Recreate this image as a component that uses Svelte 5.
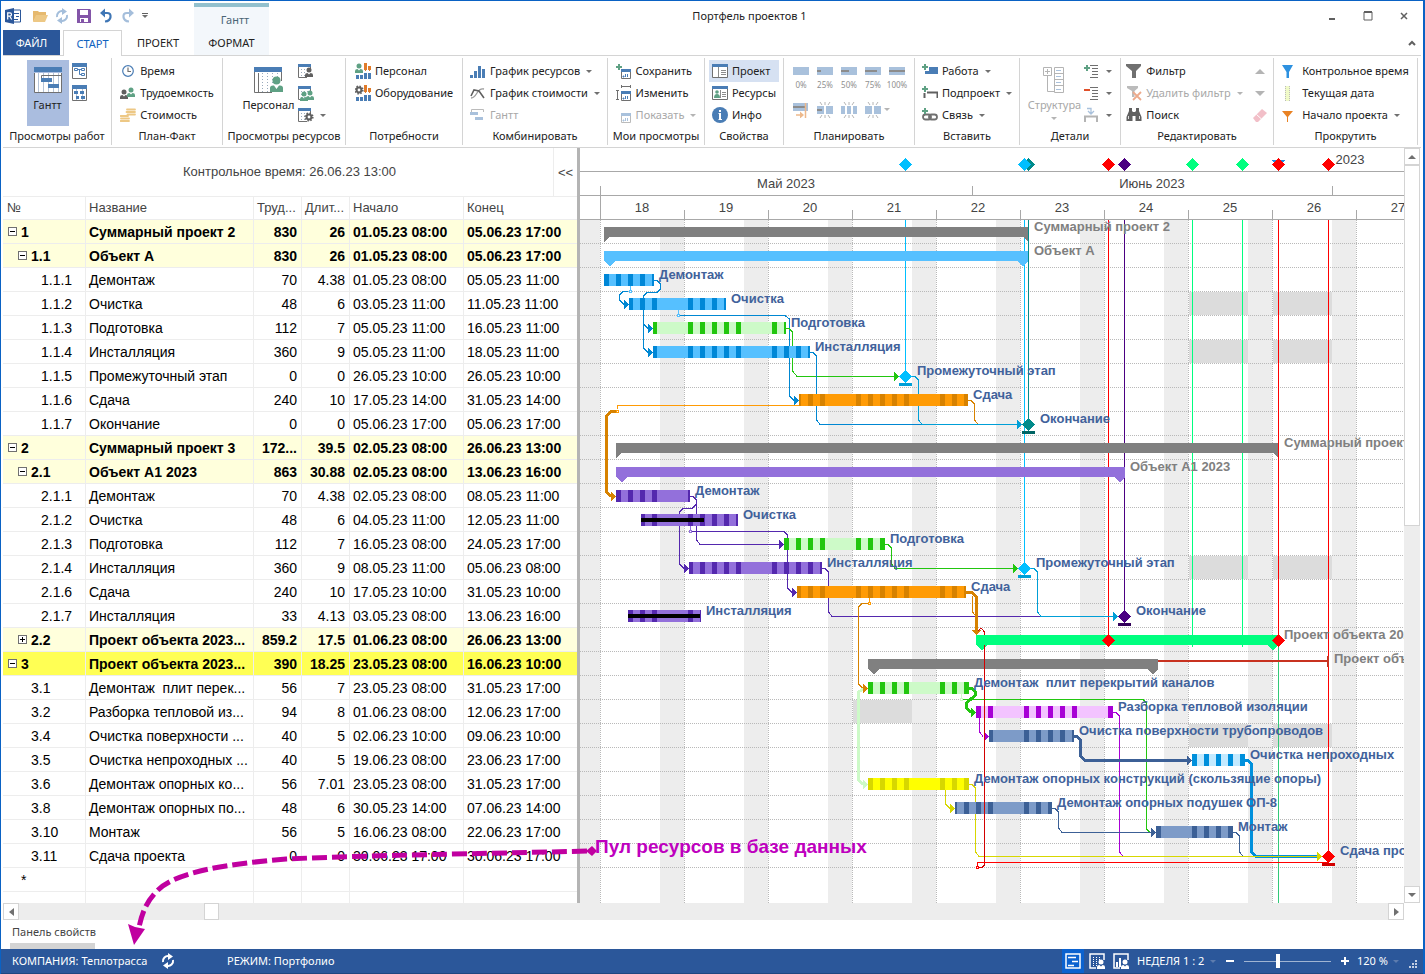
<script lang="ts">
  type Row = {
    id: string;
    name: string;
    work: string;
    days: string;
    start: string;
    end: string;
    level: number;
    toggle?: string;
    kind?: string;
  };

  const rows: Row[] = [
    { id: "1", name: "Суммарный проект 2", work: "830", days: "26", start: "01.05.23 08:00", end: "05.06.23 17:00", level: 0, toggle: "-", kind: "summary" },
    { id: "1.1", name: "Объект А", work: "830", days: "26", start: "01.05.23 08:00", end: "05.06.23 17:00", level: 1, toggle: "-", kind: "summary" },
    { id: "1.1.1", name: "Демонтаж", work: "70", days: "4.38", start: "01.05.23 08:00", end: "05.05.23 11:00", level: 2 },
    { id: "1.1.2", name: "Очистка", work: "48", days: "6", start: "03.05.23 11:00", end: "11.05.23 11:00", level: 2 },
    { id: "1.1.3", name: "Подготовка", work: "112", days: "7", start: "05.05.23 11:00", end: "16.05.23 11:00", level: 2 },
    { id: "1.1.4", name: "Инсталляция", work: "360", days: "9", start: "05.05.23 11:00", end: "18.05.23 11:00", level: 2 },
    { id: "1.1.5", name: "Промежуточный этап", work: "0", days: "0", start: "26.05.23 10:00", end: "26.05.23 10:00", level: 2 },
    { id: "1.1.6", name: "Сдача", work: "240", days: "10", start: "17.05.23 14:00", end: "31.05.23 14:00", level: 2 },
    { id: "1.1.7", name: "Окончание", work: "0", days: "0", start: "05.06.23 17:00", end: "05.06.23 17:00", level: 2 },
    { id: "2", name: "Суммарный проект 3", work: "172...", days: "39.5", start: "02.05.23 08:00", end: "26.06.23 13:00", level: 0, toggle: "-", kind: "summary" },
    { id: "2.1", name: "Объект А1 2023", work: "863", days: "30.88", start: "02.05.23 08:00", end: "13.06.23 16:00", level: 1, toggle: "-", kind: "summary" },
    { id: "2.1.1", name: "Демонтаж", work: "70", days: "4.38", start: "02.05.23 08:00", end: "08.05.23 11:00", level: 2 },
    { id: "2.1.2", name: "Очистка", work: "48", days: "6", start: "04.05.23 11:00", end: "12.05.23 11:00", level: 2 },
    { id: "2.1.3", name: "Подготовка", work: "112", days: "7", start: "16.05.23 08:00", end: "24.05.23 17:00", level: 2 },
    { id: "2.1.4", name: "Инсталляция", work: "360", days: "9", start: "08.05.23 11:00", end: "05.06.23 08:00", level: 2 },
    { id: "2.1.6", name: "Сдача", work: "240", days: "10", start: "17.05.23 10:00", end: "31.05.23 10:00", level: 2 },
    { id: "2.1.7", name: "Инсталляция", work: "33", days: "4.13", start: "03.05.23 08:00", end: "13.06.23 16:00", level: 2 },
    { id: "2.2", name: "Проект объекта 2023...", work: "859.2", days: "17.5", start: "01.06.23 08:00", end: "26.06.23 13:00", level: 1, toggle: "+", kind: "summary" },
    { id: "3", name: "Проект объекта 2023...", work: "390", days: "18.25", start: "23.05.23 08:00", end: "16.06.23 10:00", level: 0, toggle: "-", kind: "summary selected" },
    { id: "3.1", name: "Демонтаж  плит перек...", work: "56", days: "7", start: "23.05.23 08:00", end: "31.05.23 17:00", level: 1 },
    { id: "3.2", name: "Разборка тепловой из...", work: "94", days: "8", start: "01.06.23 08:00", end: "12.06.23 17:00", level: 1 },
    { id: "3.4", name: "Очистка поверхности ...", work: "40", days: "5", start: "02.06.23 10:00", end: "09.06.23 10:00", level: 1 },
    { id: "3.5", name: "Очистка непроходных ...", work: "40", days: "5", start: "19.06.23 08:00", end: "23.06.23 17:00", level: 1 },
    { id: "3.6", name: "Демонтаж опорных ко...", work: "56", days: "7.01", start: "23.05.23 08:00", end: "31.05.23 17:00", level: 1 },
    { id: "3.8", name: "Демонтаж опорных по...", work: "48", days: "6", start: "30.05.23 14:00", end: "07.06.23 14:00", level: 1 },
    { id: "3.10", name: "Монтаж", work: "56", days: "5", start: "16.06.23 08:00", end: "22.06.23 17:00", level: 1 },
    { id: "3.11", name: "Сдача проекта", work: "0", days: "0", start: "30.06.23 17:00", end: "30.06.23 17:00", level: 1 },
  ];

  // chart geometry: origin of the chart pane, first monday, px per week and day
  const OX = 580;
  const OY = 148;
  const MONDAY = 600;
  const WEEK = 84;
  const DAY = 12;
  const ROW = 24;
  const BODY = 220;
  const BOTTOM = 903;
  const RIGHT = 3000;

  const weeks = Array.from({ length: 10 }, (_, i) => ({ x: MONDAY + i * WEEK, no: 18 + i }));
  const lineRows = Array.from({ length: 27 }, (_, i) => BODY + 23.5 + i * ROW);
  const cy = (r: number) => BODY + 12 + r * ROW;

  const blue = ["#56c0ff", "#0087d7"];
  const green = ["#cdfac8", "#22c60f"];
  const orange = ["#ff9b05", "#d78200"];
  const purple = ["#9370db", "#5428ae"];
  const steel = ["#7d9bc8", "#3c6096"];

  const bars = [
    { r: 2, a: 604, b: 654, c: blue, t: "Демонтаж" },
    { r: 3, a: 629, b: 726, c: blue, t: "Очистка" },
    { r: 4, a: 653, b: 786, c: green, t: "Подготовка" },
    { r: 5, a: 653, b: 810, c: blue, t: "Инсталляция" },
    { r: 7, a: 799, b: 968, c: orange, t: "Сдача" },
    { r: 11, a: 616, b: 690, c: purple, t: "Демонтаж" },
    { r: 12, a: 641, b: 738, c: purple, t: "Очистка", done: 704 },
    { r: 13, a: 784, b: 885, c: green, t: "Подготовка" },
    { r: 14, a: 689, b: 822, c: purple, t: "Инсталляция" },
    { r: 15, a: 797, b: 966, c: orange, t: "Сдача" },
    { r: 16, a: 628, b: 701, c: purple, t: "Инсталляция", done: 700 },
    { r: 19, a: 868, b: 969, c: green, t: "Демонтаж  плит перекрытий каналов" },
    { r: 20, a: 976, b: 1113, c: ["#f3c3ff", "#a800d6"], t: "Разборка тепловой изоляции" },
    { r: 21, a: 989, b: 1074, c: steel, t: "Очистка поверхности трубопроводов" },
    { r: 22, a: 1192, b: 1245, c: ["#c3eaff", "#0090dc"], t: "Очистка непроходных" },
    { r: 23, a: 868, b: 969, c: ["#ffff00", "#d7d700"], t: "Демонтаж опорных конструкций (скользящие опоры)" },
    { r: 24, a: 955, b: 1052, c: steel, t: "Демонтаж опорных подушек ОП-8" },
    { r: 25, a: 1156, b: 1233, c: steel, t: "Монтаж" },
  ];

  const summaries = [
    { r: 0, a: 604, b: 1028, c: "#808080", tip: "hook", t: "Суммарный проект 2", lx: 1034 },
    { r: 1, a: 604, b: 1028, c: "#56c0ff", tip: "point", t: "Объект А", lx: 1034 },
    { r: 9, a: 616, b: 1278, c: "#808080", tip: "hook", t: "Суммарный проект 3", lx: 1284 },
    { r: 10, a: 616, b: 1125, c: "#9370db", tip: "point", t: "Объект А1 2023", lx: 1130 },
    { r: 17, a: 976, b: 1278, c: "#00ff7f", tip: "point", t: "Проект объекта 2023", lx: 1284 },
    { r: 18, a: 868, b: 1158, c: "#808080", tip: "point", t: "Проект объекта 2023", lx: 1334 },
  ];

  const milestones = [
    { r: 6, x: 905, c: "#00bfff", base: "#009fd7", t: "Промежуточный этап" },
    { r: 8, x: 1028, c: "#008b8b", base: "#006464", t: "Окончание" },
    { r: 14, x: 1024, c: "#00bfff", base: "#009fd7", t: "Промежуточный этап" },
    { r: 16, x: 1124, c: "#4b0082", base: "#32005a", t: "Окончание" },
    { r: 17, x: 1108, c: "#ff0000" },
    { r: 17, x: 1278, c: "#ff0000" },
    { r: 26, x: 1328, c: "#ff0000", base: "#d20000", t: "Сдача проекта" },
  ];

  const markers = [
    { x: 905, c: "#00bfff", y: 371 },
    { x: 1028, c: "#008b8b", y: 418 },
    { x: 1024, c: "#00bfff", y: 562 },
    { x: 1108, c: "#ff0000", y: 634 },
    { x: 1124, c: "#4b0082", y: 610 },
    { x: 1192, c: "#00ff7f", y: 647 },
    { x: 1242, c: "#00ff7f", y: 647 },
    { x: 1278, c: "#ff0000", y: 634 },
    { x: 1328, c: "#ff0000", y: 850 },
  ];

  const dayOff = [
    { r: 3, x: 1189 }, { r: 3, x: 1273 },
    { r: 5, x: 1189 }, { r: 5, x: 1273 },
    { r: 14, x: 1189 }, { r: 14, x: 1273 },
    { r: 20, x: 853 },
    { r: 21, x: 1189 }, { r: 21, x: 1273 },
  ];

  const B = "#0087d2";
  const C = "#009fd7";
  const G = "#22c60f";
  const O = "#d78200";
  const P = "#5428ae";
  const S = "#3c6096";
  const Y = "#d7d700";
  const V = "#a800d6";
  const PG = "#cdfac8";

  const links = [
    { c: "#56c0ff", d: "M630.5 286V290" },
    { c: B, d: "M628 291.5H623L619.5 295V300L624 304.5" },
    { c: B, d: "M654 280.5H657L660.5 284V289L657 292.5H647L643.5 296V348L648 352.5" },
    { c: B, d: "M643.5 324L648 328.5" },
    { c: "#56c0ff", d: "M678.5 310V314" },
    { c: B, d: "M680 315.5H785L789.5 319V396L794 400.5" },
    { c: G, d: "M786 328.5H789L792.5 332V371L797 376.5H894" },
    { c: B, d: "M810 352.5H813L816.5 356V420L820 424.5H922" },
    { c: C, d: "M912 376.5H915L918.5 380V420L922 424.5H1017" },
    { c: O, d: "M968 400.5H971L974.5 404V420L978 424" },
    { c: "#ff9b05", d: "M799 405.5H617.5V409" },
    { c: O, w: 3, d: "M616 411.5H611L606.5 416V492L611 496.5" },
    { c: P, d: "M690 496.5H693L696.5 500V540L700 544.5H779" },
    { c: P, d: "M696.5 504L692 508.5H683L679.5 512V564L684 568.5" },
    { c: "#9370db", d: "M690.5 526V530" },
    { c: P, d: "M692 531.5H784L787.5 535V588L792 592.5" },
    { c: G, d: "M885 544.5H888L891.5 548V564L895 568.5H1013" },
    { c: P, d: "M822 568.5H825L828.5 572V612L832 616.5H1041" },
    { c: C, d: "M1031 568.5H1034L1037.5 572V612L1041 616.5H1113" },
    { c: "#ff9b05", d: "M869.5 598V602" },
    { c: O, d: "M868 603.5H862L858.5 607V684L863 688.5" },
    { c: O, d: "M972.5 596V612L976 616" },
    { c: O, w: 3, d: "M966 592.5H972L976.5 597V631" },
    { c: PG, w: 3, d: "M863 689L858.5 692V780L863 784.5" },
    { c: PG, d: "M961.5 694V698" },
    { c: G, d: "M963 699.5H1143L1146.5 703V829L1150 832.5" },
    { c: G, w: 3, d: "M969 688.5H972L975.5 692V695L966.5 703V708L971 712.5" },
    { c: V, d: "M979.5 718V732L983 736.5" },
    { c: V, d: "M1113 712.5H1116L1119.5 716V852L1123 856" },
    { c: S, w: 3, d: "M1074 736.5H1077L1080.5 740V756L1085 760.5H1187" },
    { c: "#0090dc", w: 3, d: "M1245 760.5H1248L1251.5 764V852L1256 856.5H1317" },
    { c: S, d: "M1052 808.5H1055L1058.5 812V828L1062 832.5H1151" },
    { c: S, d: "M1233 832.5H1236L1239.5 836V852L1243 856" },
    { c: Y, d: "M945.5 790V804L950 808.5" },
    { c: Y, d: "M969 784.5H972L975.5 788V852L979 856.5H1317" },
  ];

  const arrows = [
    { x: 629, r: 3, c: B }, { x: 653, r: 4, c: B }, { x: 653, r: 5, c: B },
    { x: 799, r: 7, c: B }, { x: 899, r: 6, c: G }, { x: 1022, r: 8, c: C },
    { x: 616, r: 11, c: O }, { x: 784, r: 13, c: P }, { x: 689, r: 14, c: P },
    { x: 797, r: 15, c: P }, { x: 1018, r: 14, c: G }, { x: 1118, r: 16, c: C },
    { x: 868, r: 19, c: O }, { x: 976, r: 20, c: G }, { x: 989, r: 21, c: V },
    { x: 1192, r: 22, c: S }, { x: 868, r: 23, c: PG }, { x: 955, r: 24, c: Y },
    { x: 1156, r: 25, c: S }, { x: 1322, r: 26, c: Y },
  ];

  const knots = [
    { x: 630, y: 291, c: "#56c0ff" },
    { x: 678, y: 315, c: "#56c0ff" },
    { x: 617, y: 411, c: "#ff9b05" },
    { x: 690, y: 531, c: "#9370db" },
    { x: 869, y: 603, c: "#ff9b05" },
    { x: 961, y: 699, c: PG },
  ];

  // working hours inside a bar are drawn dark, one piece per weekday
  function workPieces(a: number, b: number) {
    const out: { x: number; w: number }[] = [];
    for (let d = Math.floor((a - MONDAY) / DAY); MONDAY + d * DAY < b; d++) {
      if (d % 7 > 4) continue;
      const x0 = Math.max(a, MONDAY + d * DAY + 4);
      const x1 = Math.min(b, MONDAY + d * DAY + 9);
      if (x1 > x0) out.push({ x: x0, w: x1 - x0 });
    }
    return out;
  }

  function diamond(x: number, y: number, r = 6) {
    return `M${x + 0.5} ${y - r}L${x + 1 + r} ${y + 0.5}L${x + 0.5} ${y + r + 1}L${x - r} ${y + 0.5}Z`;
  }

  const person = (x: number, y: number, c: string) =>
    `<circle cx="${x}" cy="${y}" r="2.5" fill="${c}"/><path d="M${x - 4} ${y + 7}V${y + 5}Q${x - 4} ${y + 3} ${x - 1.5} ${y + 3}L${x} ${y + 4.5}L${x + 1.5} ${y + 3}Q${x + 4} ${y + 3} ${x + 4} ${y + 5}V${y + 7}Z" fill="${c}"/>`;
  const gear = (x: number, y: number, c: string) =>
    `<circle cx="${x}" cy="${y}" r="2.4" fill="none" stroke="${c}" stroke-width="2"/><circle cx="${x}" cy="${y}" r="3.8" fill="none" stroke="${c}" stroke-width="1.6" stroke-dasharray="1.5 1.48"/>`;
  const dotSheet = `<path d="M0.500 4V14.500H9" fill="none" stroke="#707070"/><path d="M12.500 4V7" stroke="#707070"/><path d="M3.500 6V14M6.500 6V14M9.500 6V9" stroke="#9ab" stroke-dasharray="1 2"/><path d="M0 1H13V4H0Z" fill="#4a7db5"/>`;
  const demand = `<path d="M9 0H12V8H9ZM13 3H16V8H13Z" fill="#e07b2a"/><path d="M9 7.500H16" stroke="#fff" stroke-dasharray="1 1"/><path d="M1 12H4V16H1ZM5 12H8V16H5ZM9 10H12V16H9ZM13 10H16V16H13Z" fill="#4a7db5"/>`;
  const plus = `<path d="M0 3H2V1H4V3H6V5H4V7H2V5H0Z" fill="#5fa184"/>`;
  const smallCal = (g: string, b: string) =>
    `<path d="M5.500 8V15.500H14.500V8" fill="none" stroke="${g}"/><path d="M5 6H15V9H5Z" fill="${b}"/><path d="M7 13H8V14H7ZM9.500 11V14M11.500 11V14" stroke="${b}" fill="${b}"/>`;
  const burst = `<path d="M3 0L5 3M8 0V3M13 0L11 3M3 16L5 13M8 16V13M13 16L11 13" stroke="#b4b4b4"/>`;
  const pct = (w: number) =>
    `<path d="M0 3H16V11H0Z" fill="#a9c1dc"/><path d="M0 6H${w}V8H0Z" fill="#8c8c8c"/>`;
  const outline = `<path d="M6 2.500H14M8 5.500H14M8 8.500H14M8 11.500H14M6 14.500H14" stroke="#707070"/>`;

  const icons: Record<string, string> = {
    app: `<path d="M8 2H15.500V14H8" fill="#fff" stroke="#2b579a"/><path d="M9 5.500H14M11 8.500H14M9 11.500H13" stroke="#2b579a"/><path d="M0 2L9 0V16L0 14Z" fill="#2b579a"/><path d="M2.700 11.500V4.800H4.800Q6.500 4.800 6.500 6.500T4.800 8.200H2.700M4.800 8.200L6.700 11.500" fill="none" stroke="#fff" stroke-width="1.200"/>`,
    open: `<path d="M1 14V3H6L7 4H14V7H5Z" fill="#e6b96e"/><path d="M4 7H16L13 14H1Z" fill="#edc885"/>`,
    sync: `<path d="M3 9A5 5 0 0 1 9 3.200M13 7A5 5 0 0 1 7 12.800" fill="none" stroke="currentColor" stroke-width="2"/><path d="M8 0L13 3.500L8 7ZM8 9L3 12.500L8 16Z" fill="currentColor"/>`,
    save: `<path d="M1 1H14L15 2V15H1Z" fill="#8355a8"/><path d="M4 2H12V7H4Z" fill="#fff"/><path d="M4 10H12V14H4Z" fill="#fff"/><path d="M5 11H8V14H5Z" fill="#8355a8"/>`,
    undo: `<path d="M3 5H9Q13 5 12.500 9Q12 13 7 13.500" fill="none" stroke="#3f76b5" stroke-width="2.200"/><path d="M2 5L7 0.500V9.500Z" fill="#3f76b5"/>`,
    redo: `<path d="M13 5H7Q3 5 3.500 9Q4 13 9 13.500" fill="none" stroke="#a4bedb" stroke-width="2.200"/><path d="M14 5L9 0.500V9.500Z" fill="#a4bedb"/>`,
    gantt: `<path d="M0.500 6V25.500H27.500V6" fill="#fff" stroke="#707070"/><path d="M4.500 6V25M9.500 6V25M14.500 6V25M19.500 6V25M24.500 6V25" stroke="#b4c3d7"/><path d="M7.500 14V8.500H27.500V14" fill="none" stroke="#707070"/><path d="M0 0H28V5H0Z" fill="#4a7db5"/><path d="M7 11H18V15H7ZM14 17H25V21H14Z" fill="#4a7db5"/>`,
    net: `<path d="M0.500 4V15.500H14.500V4" fill="#fff" stroke="#707070"/><path d="M0 0H15V4H0Z" fill="#4a7db5"/><path d="M2.500 5.500H5.500V7.500H2.500ZM9.500 5.500H12.500V7.500H9.500ZM9.500 10.500H12.500V12.500H9.500ZM5.500 6.500H9.500M7.500 6.500V11.500H9.500" fill="none" stroke="#4a7db5"/>`,
    net2: `<path d="M0.500 4V15.500H14.500V4" fill="#fff" stroke="#707070"/><path d="M4.500 4V15M10.500 4V15" stroke="#b4c3d7"/><path d="M0 0H15V4H0Z" fill="#4a7db5"/><path d="M2 6H6V9H2ZM8 6H12V9H8ZM4 11H7V14H4ZM9 11H13V14H9Z" fill="#4a7db5"/>`,
    clock: `<circle cx="8" cy="8" r="5.300" fill="#fff" stroke="#4a7db5" stroke-width="1.200"/><path d="M8 4.500V8.500H11" fill="none" stroke="#707070" stroke-width="1.200"/>`,
    people: person(4, 7, "#606060") + person(11, 5, "#5fa184"),
    coins: `<path d="M7 2.500H15M6.500 5H15M7.500 7.500H15M0.500 9H8M1 11.500H9M0.500 14H9" stroke="#edc885" stroke-width="1.800" stroke-linecap="round"/>`,
    staff: `<path d="M0.500 5V25.500H18" fill="none" stroke="#707070"/><path d="M27.500 5V14M4.500 6V25" stroke="#707070"/><path d="M8.500 6V25M13.500 6V25M18.500 6V16M23.500 6V10" stroke="#9ab" stroke-dasharray="1 2"/><path d="M0 0H28V5H0Z" fill="#4a7db5"/><circle cx="22.500" cy="13.500" r="4" fill="#5fa184"/><path d="M16 25V21Q16 18.500 19 18.500H20L22.500 22L25 18.500H26Q29 18.500 29 21V25Z" fill="#5fa184"/>`,
    sheetPerson: dotSheet + person(11, 7, "#606060"),
    sheetPeople: dotSheet + person(6, 9, "#5fa184") + person(12, 8, "#5fa184"),
    sheetGear: dotSheet + gear(11, 10, "#606060"),
    demandPerson: demand + person(4, 3, "#5fa184"),
    demandGear: demand + gear(4, 5, "#606060"),
    histogram: `<path d="M0 12H3V15H0ZM4 8H7V15H4ZM8 3H11V15H8ZM12 6H15V15H12Z" fill="#4a7db5"/>`,
    curve: `<path d="M1 13Q4 13 7 8T14 4" fill="none" stroke="#9a9a9a" stroke-width="1.300"/><path d="M1 11L4 5L9 6L14 13" fill="none" stroke="#606060" stroke-width="1.600"/>`,
    ganttGray: `<path d="M1.500 5V2.500H13.500V5" fill="none" stroke="#bbb"/><path d="M0 5H8V8H0ZM5 10H13V13H5Z" fill="#a9c1dc"/>`,
    saveView: plus + smallCal("#707070", "#4a7db5"),
    editView: `<path d="M5 1.500H15M5.500 0V3M14.500 0V3M1.500 5V15M0 5.500H3M0 14.500H3" stroke="#707070"/>` + smallCal("#707070", "#4a7db5"),
    showView: smallCal("#bbb", "#a9c1dc"),
    propProject: `<path d="M0.500 3V14.500H15.500V3" fill="#fff" stroke="#707070"/><path d="M0 1H16V4H0Z" fill="#4a7db5"/><path d="M6.500 4V14M9 7.500H14M9 9.500H14M9 11.500H14" stroke="#8c8c8c"/>`,
    propResource: `<path d="M0.500 3V14.500H15.500V3" fill="#fff" stroke="#707070"/><path d="M0 1H16V4H0Z" fill="#4a7db5"/><path d="M10 7.500H14M10 9.500H14M10 11.500H14M8.500 5V13" stroke="#8c8c8c"/><circle cx="5" cy="7" r="1.800" fill="#5fa184"/><path d="M2 13Q2 9 5 9T8 13Z" fill="#5fa184"/>`,
    info: `<circle cx="8" cy="8" r="8" fill="#4a7db5"/><path d="M7 3H9V5H7ZM6.500 6H9V12H10V13H6.500V12H7V7H6.500Z" fill="#fff"/>`,
    p0: pct(0),
    p25: pct(4),
    p50: pct(8),
    p75: pct(12),
    p100: pct(16),
    move: `<path d="M0 1H15V9H0Z" fill="#a9c1dc"/><path d="M0 4H12V6H0Z" fill="#8c8c8c"/><path d="M12.500 1V16M3 13H8" stroke="#edb98c" stroke-width="1.500"/><path d="M7 9.500L11 13L7 16.500Z" fill="#edb98c"/>`,
    split1: burst + `<path d="M0 4H7V12H0ZM9 4H16V12H9Z" fill="#a9c1dc"/><path d="M0 7H5V9H0Z" fill="#8c8c8c"/>`,
    split2: burst + `<path d="M0 4H4V12H0ZM6 4H10V12H6ZM12 4H16V12H12Z" fill="#a9c1dc"/>`,
    split3: burst + `<path d="M0 4H7V12H0ZM9 4H16V12H9Z" fill="#a9c1dc"/>`,
    task: `<path d="M7 4H16V11H3V8H7Z" fill="#4a7db5"/>` + plus,
    subproject: `<path d="M2.500 13V8M5 7.500H15.500V13" fill="none" stroke="#606060" stroke-width="2"/>` + plus,
    link: `<rect x="1" y="7.500" width="8" height="5" rx="2.500" fill="none" stroke="#707070" stroke-width="1.800"/><rect x="7" y="7.500" width="8" height="5" rx="2.500" fill="none" stroke="#707070" stroke-width="1.800"/>` + plus,
    structure: `<path d="M0.500 0.500H8.500V8.500H0.500ZM2 4.500H7M4.500 2V7M4.500 9V24.500H11M11.500 0.500H20.500V25.500H11.500ZM11.500 6.500H20.500M11.500 12.500H20.500M11.500 18.500H20.500" fill="none" stroke="#b4b4b4"/><path d="M13 3.500H18M13 9.500H18M13 15.500H18M13 22.500H18" stroke="#a9c1dc"/>`,
    expand: outline + `<path d="M0 4H2V2H4V4H6V6H4V8H2V6H0Z" fill="#5fa184"/>`,
    collapse: outline + `<path d="M0 4H6V6H0Z" fill="#e0502a"/>`,
    outdent: `<path d="M1 15V9.500H13V15" fill="none" stroke="#b4b4b4" stroke-width="2"/><path d="M3 1.500H7V6M4 4L7 7L10 4" fill="none" stroke="#a9c1dc" stroke-width="1.300"/>`,
    filter: `<path d="M0 1H15V3L10 8V15H6V8L0 3Z" fill="#707070"/>`,
    filterOff: `<path d="M1 1H12V3L8.500 6V12H6V6L1 3Z" fill="#bbb"/><path d="M7 7L15 15M15 7L7 15" stroke="#edaa8c" stroke-width="1.800"/>`,
    search: `<path d="M3 1H6V4L7 5H9L10 4V1H13V4L15.500 10V14H9.500V9H6.500V14H0.500V10L3 4Z" fill="#606060"/><path d="M2.500 9V12M13.500 9V12" stroke="#ddd"/>`,
    goTime: `<path d="M0 2H11L7 9V15H4.500V9Z" fill="#2d91e0"/>`,
    goToday: `<path d="M3 1H8V16H3Z" fill="#f0fac8"/><path d="M3.500 1V16M7.500 1V16" stroke="#bbb" stroke-dasharray="1 1"/>`,
    goStart: `<path d="M0 4H11L6 10V15H5V10Z" fill="#e98224"/>`,
    eraser: `<path d="M1 11L10 2L15 6L6 15H4Z" fill="#f2bfc8"/><path d="M4.500 7.500L9.500 12" stroke="#fff"/>`,
    viewGantt: `<path d="M1 1H15V15H1Z" fill="none" stroke="#fff" stroke-width="1.500"/><path d="M3 4.500H11M7 8.500H13M3 12.500H9" stroke="#fff" stroke-width="1.500"/>`,
    viewGrid: `<path d="M7 15H1V1H15V7" fill="none" stroke="#fff" stroke-width="1.500"/><path d="M4.500 4V14M7.500 4V14M10.500 4V7" stroke="#fff" stroke-dasharray="1 1"/>` + person(12, 9, "#fff"),
    viewBars: `<path d="M7 15H1V1H15V7" fill="none" stroke="#fff" stroke-width="1.500"/><path d="M3 9H5V14H3ZM6 5H8V14H6Z" fill="#fff"/>` + person(12, 9, "#fff"),
  };
</script>

{#snippet ico(name: string, w = 16, h = 16)}
  <svg class="ico" width={w} height={h} viewBox="0 0 {w} {h}" aria-hidden="true">{@html icons[name]}</svg>
{/snippet}

{#snippet item(icon: string, label: string, arrow = false, cls = "")}
  <button class="item {cls}">
    {@render ico(icon)}
    <span>{label}</span>
    {#if arrow}<i class="caret"></i>{/if}
  </button>
{/snippet}

{#snippet mini(icon: string, label: string, arrow = false)}
  <button class="item" aria-label={label}>
    {@render ico(icon)}
    {#if arrow}<i class="caret"></i>{/if}
  </button>
{/snippet}

<div class="app">
  <header class="titlebar">
    <div class="quick">
      <span class="logo">{@render ico("app")}</span>
      <button aria-label="Открыть">{@render ico("open")}</button>
      <button class="pale" aria-label="Обновить">{@render ico("sync")}</button>
      <button aria-label="Сохранить">{@render ico("save")}</button>
      <button aria-label="Отменить">{@render ico("undo")}</button>
      <button aria-label="Вернуть">{@render ico("redo")}</button>
      <button class="more" aria-label="Ещё"><i class="caret"></i></button>
    </div>
    <div class="context">Гантт</div>
    <h1>Портфель проектов 1</h1>
    <div class="window-buttons">
      <button aria-label="Свернуть"><svg width="10" height="10"><path d="M2 8H8" stroke="#606060" stroke-width="2" /></svg></button>
      <button aria-label="Развернуть"><svg width="10" height="10"><path d="M1 1H9V9H1Z" fill="none" stroke="#606060" stroke-width="1" /><path d="M1 1H9" stroke="#606060" stroke-width="2" /></svg></button>
      <button aria-label="Закрыть"><svg width="10" height="10"><path d="M2 2L8 8M8 2L2 8" stroke="#606060" stroke-width="1.5" /></svg></button>
    </div>
  </header>

  <nav class="tabs">
    <button class="tab file">ФАЙЛ</button>
    <button class="tab active">СТАРТ</button>
    <button class="tab">ПРОЕКТ</button>
    <button class="tab format">ФОРМАТ</button>
    <button class="fold" aria-label="Свернуть ленту"><svg width="8" height="6"><path d="M1 5L4 2L7 5" fill="none" stroke="#606060" stroke-width="2" /></svg></button>
  </nav>

  <div class="ribbon">
    <section class="group">
      <div class="body">
        <button class="big on">{@render ico("gantt", 28, 26)}<span>Гантт</span></button>
        <div class="col">
          {@render mini("net", "Сеть")}
          {@render mini("net2", "Сетевой график")}
        </div>
      </div>
      <h2>Просмотры работ</h2>
    </section>
    <section class="group">
      <div class="body col">
        {@render item("clock", "Время")}
        {@render item("people", "Трудоемкость")}
        {@render item("coins", "Стоимость")}
      </div>
      <h2>План-Факт</h2>
    </section>
    <section class="group">
      <div class="body">
        <button class="big">{@render ico("staff", 29, 26)}<span>Персонал</span></button>
        <div class="col">
          {@render mini("sheetPerson", "Персонал")}
          {@render mini("sheetPeople", "Группы")}
          {@render mini("sheetGear", "Оборудование", true)}
        </div>
      </div>
      <h2>Просмотры ресурсов</h2>
    </section>
    <section class="group">
      <div class="body col">
        {@render item("demandPerson", "Персонал")}
        {@render item("demandGear", "Оборудование")}
      </div>
      <h2>Потребности</h2>
    </section>
    <section class="group">
      <div class="body col">
        {@render item("histogram", "График ресурсов", true)}
        {@render item("curve", "График стоимости", true)}
        {@render item("ganttGray", "Гантт", false, "off")}
      </div>
      <h2>Комбинировать</h2>
    </section>
    <section class="group">
      <div class="body col">
        {@render item("saveView", "Сохранить")}
        {@render item("editView", "Изменить")}
        {@render item("showView", "Показать", true, "off")}
      </div>
      <h2>Мои просмотры</h2>
    </section>
    <section class="group">
      <div class="body col">
        {@render item("propProject", "Проект", false, "on")}
        {@render item("propResource", "Ресурсы")}
        {@render item("info", "Инфо")}
      </div>
      <h2>Свойства</h2>
    </section>
    <section class="group">
      <div class="body plan">
        {#each [0, 25, 50, 75, 100] as p}
          <button class="pct">{@render ico("p" + p)}<span>{p}%</span></button>
        {/each}
        {#each ["move", "split1", "split2", "split3"] as name}
          <button class="pct" aria-label={name}>{@render ico(name)}</button>
        {/each}
        <i class="caret pale-caret"></i>
      </div>
      <h2>Планировать</h2>
    </section>
    <section class="group">
      <div class="body col">
        {@render item("task", "Работа", true)}
        {@render item("subproject", "Подпроект", true)}
        {@render item("link", "Связь", true)}
      </div>
      <h2>Вставить</h2>
    </section>
    <section class="group">
      <div class="body">
        <button class="big off">{@render ico("structure", 22, 26)}<span>Структура</span><i class="caret"></i></button>
        <div class="col">
          {@render mini("expand", "Развернуть", true)}
          {@render mini("collapse", "Свернуть", true)}
          {@render mini("outdent", "Уровень", true)}
        </div>
      </div>
      <h2>Детали</h2>
    </section>
    <section class="group">
      <div class="body">
        <div class="col">
          {@render item("filter", "Фильтр")}
          {@render item("filterOff", "Удалить фильтр", true, "off")}
          {@render item("search", "Поиск")}
        </div>
        <div class="col find">
          <button aria-label="Предыдущий"><svg width="10" height="5"><path d="M0 5L5 0L10 5Z" fill="#b4b4b4" /></svg></button>
          <button aria-label="Следующий"><svg width="10" height="5"><path d="M0 0L5 5L10 0Z" fill="#b4b4b4" /></svg></button>
          <button aria-label="Очистить">{@render ico("eraser")}</button>
        </div>
      </div>
      <h2>Редактировать</h2>
    </section>
    <section class="group">
      <div class="body col">
        {@render item("goTime", "Контрольное время")}
        {@render item("goToday", "Текущая дата")}
        {@render item("goStart", "Начало проекта", true)}
      </div>
      <h2>Прокрутить</h2>
    </section>
  </div>

  <main>
    <div class="grid-pane">
      <div class="control-time">
        <span>Контрольное время: 26.06.23 13:00</span>
        <button>&lt;&lt;</button>
      </div>
      <table>
        <colgroup>
          <col class="c-id" /><col class="c-name" /><col class="c-num" /><col class="c-num" /><col class="c-date" /><col class="c-date" />
        </colgroup>
        <thead>
          <tr><th>№</th><th>Название</th><th>Труд...</th><th>Длит...</th><th>Начало</th><th>Конец</th></tr>
        </thead>
        <tbody>
          {#each rows as row}
            <tr class={row.kind}>
              <td>
                <div class="id" style="padding-left: {row.level * 10}px">
                  <span class="toggle" class:box={row.toggle} class:plus={row.toggle === "+"}></span>{row.id}
                </div>
              </td>
              <td>{row.name}</td>
              <td class="num">{row.work}</td>
              <td class="num">{row.days}</td>
              <td>{row.start}</td>
              <td>{row.end}</td>
            </tr>
          {/each}
          <tr><td class="new">*</td><td></td><td></td><td></td><td></td><td></td></tr>
          <tr class="rest"><td></td><td></td><td></td><td></td><td></td><td></td></tr>
        </tbody>
      </table>
    </div>
    <div class="splitter"></div>

    <div class="chart">
      <svg width="100%" height="100%" shape-rendering="crispEdges">
        <g transform="translate({-OX} {-OY})">
          <rect x={OX} y={BODY} width={MONDAY - OX} height={BOTTOM - BODY} fill="#ededed" />
          {#each weeks as w}
            <rect x={w.x + 60} y={BODY} width="24" height={BOTTOM - BODY} fill="#ededed" />
          {/each}
          {#each dayOff as d}
            <rect x={d.x} y={cy(d.r) - 12} width="59" height="23" fill="#dcdcdc" />
          {/each}
          {#each lineRows as y}
            <path d="M{OX} {y}H{RIGHT}" stroke="#b9b9b9" stroke-dasharray="1 1" />
          {/each}
          {#each weeks as w}
            <path d="M{w.x + 0.5} {BODY}V{BOTTOM}" stroke="#b9b9b9" stroke-dasharray="1 1" />
            <path d="M{w.x + 0.5} 210V219" stroke="#a8a8a8" />
            <text class="scale" x={w.x + 42} y="212">{w.no}</text>
          {/each}
          <path d="M{OX} 171.5H{RIGHT}M{OX} 195.5H{RIGHT}M{OX} 219.5H{RIGHT}M600.5 186V219M972.5 186V195M1332.5 186V195" fill="none" stroke="#a8a8a8" />
          <text class="scale" x="786" y="188">Май 2023</text>
          <text class="scale" x="1152" y="188">Июнь 2023</text>
          <text class="scale" x="1350" y="164">2023</text>

          <path d="M1278.5 645V{BOTTOM}" stroke="#32c878" />
          {#each markers as m}
            <path d="M{m.x + 0.5} 220V{m.y}" stroke={m.c} />
            {#if m.x === 1278}<path d="M1272 160H1285L1278.500 168Z" fill="#1e90e6" />{/if}
            <path d={diamond(m.x, 164)} fill={m.c} />
          {/each}

          {#each links as l}
            <path d={l.d} stroke={l.c} stroke-width={l.w ?? 1} fill="none" />
          {/each}
          {#each arrows as a}
            <path d="M{a.x - 5} {cy(a.r) - 4}L{a.x} {cy(a.r) + 0.5}L{a.x - 5} {cy(a.r) + 5}Z" fill={a.c} />
          {/each}
          <path d="M971 630H982L976.500 635Z" fill={O} />
          {#each knots as k}
            <rect x={k.x - 0.5} y={k.y - 0.5} width="2" height="2" fill="#fff" stroke={k.c} />
          {/each}

          {#each summaries as s}
            <rect x={s.a} y={cy(s.r) - 5} width={s.b - s.a} height="10" fill={s.c} />
            {#if s.tip === "hook"}
              <path d="M{s.a} {cy(s.r) + 5}h5l-5 5ZM{s.b} {cy(s.r) + 5}h-5l5 5Z" fill={s.c} />
            {:else}
              <path d="M{s.a} {cy(s.r) + 5}h11l-5.500 5.500ZM{s.b} {cy(s.r) + 5}h-11l5.500 5.500Z" fill={s.c} />
            {/if}
            <text class="label dim" x={s.lx} y={cy(s.r) - 1}>{s.t}</text>
          {/each}
          <path d="M1158 661H1328M1328 656V667" stroke="#c83220" stroke-width="2" />

          {#each bars as b}
            <rect x={b.a} y={cy(b.r) - 6} width={b.b - b.a} height="12" fill={b.c[0]} />
            {#each workPieces(b.a, b.b) as p}
              <rect x={p.x} y={cy(b.r) - 6} width={p.w} height="12" fill={b.c[1]} />
            {/each}
            {#if b.done}
              <rect x={b.a} y={cy(b.r) - 2} width={b.done - b.a} height="4" fill="#000" />
            {/if}
          {/each}

          <path d="M978 631L981 628L984.500 632V635M984.500 645V865L982 867.500H978" stroke="#d20000" fill="none" />
          <path d="M977.500 866V862.500H1328" stroke="#ff0000" fill="none" />
          <rect x="976.500" y="866.500" width="2" height="2" fill="#fff" stroke="#ff0000" />

          {#each milestones as m}
            <path d={diamond(m.x, cy(m.r))} fill={m.c} />
            {#if m.base}
              <rect x={m.x - 6} y={cy(m.r) + 7} width="13" height="3" fill={m.base} />
            {/if}
          {/each}
          {#each bars as b}
            <text class="label" x={b.b + 5} y={cy(b.r) - 1}>{b.t}</text>
          {/each}
          {#each milestones as m}
            {#if m.t}<text class="label" x={m.x + 12} y={cy(m.r) - 1}>{m.t}</text>{/if}
          {/each}
        </g>
      </svg>
    </div>

    <div class="vscroll">
      <button aria-label="Вверх"><svg width="8" height="4"><path d="M0 4L4 0L8 4Z" fill="#707070" /></svg></button>
      <div class="thumb"></div>
      <button aria-label="Вниз"><svg width="8" height="4"><path d="M0 0L4 4L8 0Z" fill="#707070" /></svg></button>
    </div>

    <svg class="callout-arrow" width="480" height="110" aria-hidden="true">
      <path d="M461 11C350 14 250 15 160 19C100 24 50 32 32 50C20 62 16 72 12 92" fill="none" stroke="#c000a0" stroke-width="5" stroke-dasharray="15 5" />
      <path d="M2 84L9 87L19 89L8 105Z" fill="#c000a0" />
      <path d="M460 11L466 6L471 11L466 16Z" fill="#c000a0" />
    </svg>
    <div class="callout">Пул ресурсов в базе данных</div>
  </main>

  <div class="hscroll">
    <button aria-label="Влево"><svg width="5" height="8"><path d="M5 0L0 4L5 8Z" fill="#707070" /></svg></button>
    <div class="thumb"></div>
    <button aria-label="Вправо"><svg width="5" height="8"><path d="M0 0L5 4L0 8Z" fill="#707070" /></svg></button>
  </div>

  <div class="props"><button>Панель свойств</button></div>

  <footer>
    <span class="company">КОМПАНИЯ: Теплотрасса</span>
    <button aria-label="Обновить">{@render ico("sync")}</button>
    <span class="mode">РЕЖИМ: Портфолио</span>
    <div class="views">
      <button class="on" aria-label="Гантт">{@render ico("viewGantt")}</button>
      <button aria-label="Ресурсы">{@render ico("viewGrid")}</button>
      <button aria-label="Загрузка">{@render ico("viewBars")}</button>
    </div>
    <span class="unit">НЕДЕЛЯ 1 : 2</span>
    <i class="caret"></i>
    <button class="step" aria-label="Уменьшить"><svg width="8" height="8"><path d="M0 4H8" stroke="#fff" stroke-width="2" /></svg></button>
    <input type="range" min="0" max="100" value="39" aria-label="Масштаб" />
    <button class="step" aria-label="Увеличить"><svg width="8" height="8"><path d="M0 4H8M4 0V8" stroke="#fff" stroke-width="2" /></svg></button>
    <span class="percent">120 %</span>
    <i class="caret"></i>
    <svg class="grip" width="9" height="9" aria-hidden="true"><path d="M6 0H8V2H6ZM3 3H5V5H3ZM6 3H8V5H6ZM0 6H2V8H0ZM3 6H5V8H3ZM6 6H8V8H6Z" fill="#c3cfe3" /></svg>
  </footer>
</div>

<style>
  :global(body) {
    margin: 0;
  }

  .app {
    min-height: 100vh;
    box-sizing: border-box;
    display: flex;
    flex-direction: column;
    background: #fff;
    border: solid #0a62c4;
    border-width: 1px 2px 0 1px;
    font: 11px/16px "Noto Sans", "Open Sans", sans-serif;
    color: #222;
    overflow: hidden;
  }

  button {
    font: inherit;
    color: inherit;
    background: none;
    border: 0;
    padding: 0;
    margin: 0;
    display: flex;
    align-items: center;
    justify-content: center;
    white-space: nowrap;
  }

  h1,
  h2 {
    margin: 0;
    font: inherit;
    white-space: nowrap;
  }

  .ico {
    display: block;
    flex-shrink: 0;
  }

  .caret {
    border: 3px solid transparent;
    border-top-color: #707070;
    border-bottom: 0;
    flex-shrink: 0;
  }

  /* title and tabs */
  .titlebar {
    display: flex;
    height: 29px;
  }

  .quick {
    display: flex;
    align-items: center;
    gap: 6px;
    width: 189px;
    padding-left: 4px;
  }

  .logo {
    margin-right: 5px;
  }

  .quick .pale {
    color: #a4bedb;
  }

  .quick .more {
    height: 6px;
    border-top: 1px solid #606060;
  }

  .context {
    width: 75px;
    margin-top: 2px;
    padding: 5px 0 0 7px;
    box-sizing: border-box;
    border-top: 4px solid #92c0cd;
    background: #f3f7fb;
    color: #4a6576;
    text-align: center;
  }

  h1 {
    flex: 1;
    text-align: center;
    line-height: 30px;
  }

  .window-buttons {
    display: flex;
    justify-content: flex-end;
    width: 192px;
    padding-right: 1px;
  }

  .window-buttons button {
    width: 36px;
  }

  .tabs {
    display: flex;
    height: 25px;
    padding: 0 2px;
    position: relative;
  }

  .tab {
    width: 72px;
    height: 25px;
  }

  .tab.file {
    width: 57px;
    background: #2b579a;
    color: #fff;
    margin-right: 3px;
  }

  .tab.active {
    width: 59px;
    height: 26px;
    box-sizing: border-box;
    border: 1px solid #d4d4d4;
    border-bottom: 0;
    background: #fff;
    color: #0f62c0;
    z-index: 1;
  }

  .tab.format {
    width: 75px;
    background: #f3f7fb;
  }

  .fold {
    margin-left: auto;
    padding-right: 5px;
  }

  /* ribbon */
  .ribbon {
    display: grid;
    grid-template-columns: 109px 111px 123px 117px 145px 97px 79px 131px 105px 101px 153px 144px;
    height: 91px;
    margin: 0 2px;
    border-top: 1px solid #d4d4d4;
    border-bottom: 1px solid #d4d4d4;
  }

  .group {
    margin: 2px 0 3px;
    padding-top: 2px;
    border-right: 1px solid #d4d4d4;
    display: flex;
    flex-direction: column;
    align-items: center;
    min-width: 0;
  }

  .body {
    display: flex;
    gap: 3px;
    height: 67px;
  }

  .col {
    display: flex;
    flex-direction: column;
    gap: 0;
  }

  .group h2 {
    line-height: 18px;
  }

  .item {
    height: 22px;
    gap: 4px;
    justify-content: flex-start;
  }

  .item.on {
    background: #d6e1f2;
    padding: 0 3px;
    margin: 0 -3px;
  }

  .item .caret {
    margin-left: 2px;
  }

  .off {
    color: #a8a8a8;
  }

  .off .caret,
  .pale-caret {
    border-top-color: #b4b4b4;
  }

  .big {
    flex-direction: column;
    justify-content: flex-start;
    height: 66px;
    box-sizing: border-box;
    padding-top: 7px;
    gap: 4px;
  }

  .big.on {
    width: 42px;
    background: #aabddf;
  }

  .plan {
    display: grid;
    grid-template-columns: repeat(5, 16px);
    grid-template-rows: 33px 33px;
    gap: 0 8px;
    align-items: center;
  }

  .pct {
    flex-direction: column;
    font-size: 8px;
    line-height: 9px;
    color: #909090;
  }

  .plan .caret {
    margin-left: -5px;
    width: 0;
  }

  .find {
    margin-left: 6px;
  }

  .find button {
    height: 22px;
  }

  /* task grid */
  main {
    flex: 1;
    display: flex;
    position: relative;
    padding: 0 3px 0 2px;
  }

  .grid-pane {
    flex: 0 0 574px;
    overflow: hidden;
    font-family: "Liberation Sans", Arial, sans-serif;
  }

  .control-time {
    display: flex;
    height: 48px;
    font-size: 13px;
    line-height: 47px;
    color: #444;
  }

  .control-time span {
    flex: 1;
    text-align: center;
    padding-left: 23px;
  }

  .control-time button {
    width: 24px;
    border-left: 1px solid #ededed;
  }

  table {
    width: 574px;
    table-layout: fixed;
    border-collapse: separate;
    border-spacing: 0;
    font-size: 14px;
    color: #000;
  }

  .c-id {
    width: 83px;
  }

  .c-name {
    width: 168px;
  }

  .c-num {
    width: 48px;
  }

  .c-date {
    width: 114px;
  }

  th,
  td {
    box-sizing: border-box;
    height: 24px;
    padding: 0 4px 0 3px;
    border: solid #ededed;
    border-width: 0 1px 1px 0;
    text-align: left;
    white-space: pre;
    overflow: hidden;
    line-height: 22px;
  }

  th {
    border-top-width: 1px;
    font-size: 13px;
    font-weight: 400;
    color: #444;
  }

  th:first-child {
    padding-left: 4px;
  }

  td:nth-child(6),
  th:nth-child(6) {
    border-right: 0;
  }

  .num {
    text-align: right;
  }

  .summary td {
    background: #ffffdc;
    font-weight: 700;
  }

  .selected td {
    background: #ffff54;
  }

  td.new {
    padding-left: 18px;
  }

  .rest td {
    height: 11px;
    border-bottom: 0;
  }

  .id {
    display: flex;
    align-items: center;
  }

  .toggle {
    width: 9px;
    height: 9px;
    margin: 0 4px 0 2px;
    box-sizing: border-box;
    flex-shrink: 0;
  }

  .toggle.box {
    border: 1px solid #707070;
    background: linear-gradient(#000, #000) center / 5px 1px no-repeat #fff;
  }

  .toggle.plus {
    background:
      linear-gradient(#000, #000) center / 5px 1px no-repeat,
      linear-gradient(#000, #000) center / 1px 5px no-repeat #fff;
  }

  .splitter {
    width: 3px;
    background: #b4b4b4;
  }

  /* chart */
  .chart {
    flex: 1;
    position: relative;
    overflow: hidden;
    min-width: 0;
  }

  .chart svg {
    position: absolute;
    inset: 0;
  }

  .chart text {
    font-family: "Liberation Sans", Arial, sans-serif;
    white-space: pre;
  }

  .scale {
    font-size: 13px;
    text-anchor: middle;
    fill: #444;
  }

  .label {
    font-size: 13px;
    font-weight: 700;
    fill: #41629b;
  }

  .label.dim {
    fill: #808080;
  }

  .vscroll {
    width: 16px;
    background: #ededed;
    display: flex;
    flex-direction: column;
    justify-content: space-between;
  }

  .vscroll button,
  .hscroll button,
  .thumb {
    box-sizing: border-box;
    width: 16px;
    height: 17px;
    background: #fff;
    border: 1px solid #d4d4d4;
  }

  .vscroll .thumb {
    height: 361px;
    margin-bottom: auto;
  }

  .callout-arrow {
    position: absolute;
    left: 125px;
    top: 692px;
  }

  .callout {
    position: absolute;
    left: 594px;
    top: 688px;
    font: bold 19px/22px "Liberation Sans", Arial, sans-serif;
    color: #be00be;
  }

  .hscroll {
    display: flex;
    margin: 0 19px 0 2px;
    background: #ededed;
  }

  .hscroll .thumb {
    width: 15px;
    margin: 0 auto 0 185px;
  }

  .props {
    height: 29px;
    padding-left: 9px;
    display: flex;
  }

  .props button {
    width: 85px;
    height: 29px;
    padding: 0 0 0 2px;
    box-sizing: border-box;
    border-bottom: 6px solid #d4d4d4;
    color: #444;
    justify-content: flex-start;
  }

  footer {
    height: 25px;
    box-sizing: border-box;
    border-bottom: 1px solid #1e4680;
    margin-left: -1px;
    background: #2b579a;
    color: #fff;
    display: flex;
    align-items: center;
    padding: 0 5px 0 12px;
    white-space: nowrap;
  }

  .company {
    width: 148px;
  }

  .mode {
    margin: 0 auto 0 51px;
  }

  .views {
    display: flex;
    margin-right: 4px;
  }

  .views button {
    width: 24px;
    height: 24px;
  }

  .views .on {
    background: #0b62cf;
    width: 22px;
    margin-right: 1px;
  }

  footer .caret {
    border-top-color: #5d7cae;
  }

  .unit {
    width: 73px;
  }

  .step {
    margin: 0 10px;
  }

  .percent {
    width: 36px;
    margin-left: -2px;
  }

  .grip {
    margin-left: 10px;
    margin-top: 6px;
  }

  input[type="range"] {
    appearance: none;
    width: 87px;
    height: 16px;
    margin: 0;
    background: linear-gradient(#a0b4d2, #a0b4d2) center / 100% 1px no-repeat;
  }

  input[type="range"]::-webkit-slider-thumb {
    appearance: none;
    width: 4px;
    height: 14px;
    background: #fff;
  }
</style>
